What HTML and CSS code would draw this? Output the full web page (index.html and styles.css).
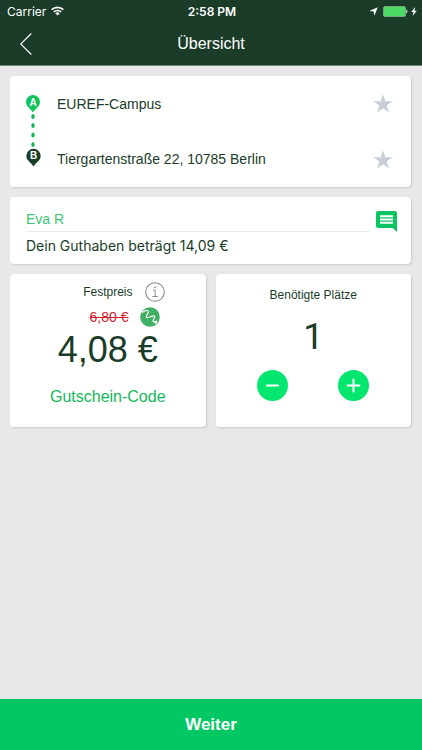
FILE: index.html
```html
<!DOCTYPE html>
<html lang="de">
<head>
<meta charset="utf-8">
<meta name="viewport" content="width=device-width, initial-scale=1">
<title>Übersicht</title>
<link rel="stylesheet" href="styles.css">
</head>
<body>
<div class="app">
  <header class="header">
    <div class="status">
      <div class="status-left">
        <span>Carrier</span>
        <svg width="13" height="10" viewBox="0 0 13 10" fill="none" stroke="#fff" stroke-width="1.7" aria-hidden="true">
          <path d="M.7 3.700a8.300 8.300 0 0 1 11.600 0M2.800 6a5.300 5.300 0 0 1 7.400 0"/>
          <path d="M6.500 9.600 4.400 7.400a3 3 0 0 1 4.200 0z" fill="#fff" stroke="none"/>
        </svg>
      </div>
      <span class="clock">2:58 PM</span>
      <div class="status-right">
        <svg width="9" height="9" viewBox="0 0 9 9" fill="#fff" aria-hidden="true"><path d="M8.800.2 5.300 8.800 4.600 4.600.2 4.100z"/></svg>
        <svg width="25" height="11" viewBox="0 0 25 11" aria-hidden="true">
          <rect x=".5" y=".5" width="22" height="10" rx="1.500" fill="#4cd964" stroke="#8fb596" stroke-width=".7"/>
          <path d="M23.400 3.600c1.400.5 1.400 3.300 0 3.800z" fill="#fff"/>
        </svg>
        <svg width="6" height="9" viewBox="0 0 6 9" fill="#fff" aria-hidden="true"><path d="M4.200 0 .2 5h2.300L1.600 9l4.200-5.300H3.400z"/></svg>
      </div>
    </div>
    <div class="navbar">
      <button class="plain" type="button" aria-label="Zurück">
        <svg width="12" height="22" viewBox="0 0 12 22" fill="none" stroke="#fff" stroke-width="1.100"><path d="M11.300.5.7 11l10.600 10.500"/></svg>
      </button>
      <h1 class="title">Übersicht</h1>
    </div>
  </header>

  <main class="content">
    <section class="card route">
      <svg class="pins" width="15" height="74" viewBox="0 0 15 74" aria-hidden="true">
        <path d="M7 17.500C4.300 13.200 0 11.500 0 7a7 7 0 0 1 14 0C14 11.500 9.700 13.200 7 17.500z" fill="#10c45c"/>
        <g fill="#14b85a">
          <ellipse cx="7" cy="21.500" rx="1.700" ry="2.500"/><ellipse cx="7" cy="30.500" rx="1.700" ry="2.500"/>
          <ellipse cx="7" cy="40" rx="1.700" ry="2.500"/><ellipse cx="7" cy="49.500" rx="1.700" ry="2.500"/>
        </g>
        <path d="M7.500 71.500C4.800 67 .3 65.500 .3 61a7.200 7.200 0 0 1 14.400 0C14.700 65.500 10.200 67 7.500 71.500z" fill="#1a3d28"/>
        <text class="pin-letter" x="7" y="10.500">A</text>
        <text class="pin-letter" x="7.500" y="64">B</text>
      </svg>
      <span class="address">EUREF-Campus</span>
      <button class="plain" type="button" aria-label="EUREF-Campus als Favorit">
        <svg width="20" height="19" viewBox="0 0 20 19" fill="#c8cfd9"><path d="m10 .3 2.300 6.900h7.300l-5.900 4.300 2.200 7L10 14.200l-5.900 4.300 2.200-7L.4 7.200h7.300z"/></svg>
      </button>
      <span class="address">Tiergartenstraße 22, 10785 Berlin</span>
      <button class="plain" type="button" aria-label="Tiergartenstraße als Favorit">
        <svg width="20" height="19" viewBox="0 0 20 19" fill="#c8cfd9"><path d="m10 .3 2.300 6.900h7.300l-5.900 4.300 2.200 7L10 14.200l-5.900 4.300 2.200-7L.4 7.200h7.300z"/></svg>
      </button>
    </section>

    <section class="card account">
      <div class="account-text">
        <p class="name">Eva R</p>
        <p class="balance">Dein Guthaben beträgt 14,09 €</p>
      </div>
      <button class="plain" type="button" aria-label="Nachricht">
        <svg width="21" height="21" viewBox="0 0 21 21"><path d="M2 0h17q2 0 2 2v19l-4.300-4H2q-2 0-2-2V2q0-2 2-2z" fill="#0dc463"/><path d="M4 5.200h13M4 8.500h13M4 11.800h13" stroke="#fff" stroke-width="1.900"/></svg>
      </button>
    </section>

    <div class="pair">
      <section class="card price">
        <div class="fixed">
          <span class="label">Festpreis</span>
          <button class="plain" type="button" aria-label="Information">
            <svg width="20" height="20" viewBox="0 0 20 20" fill="none" stroke="#8b8b8b"><circle cx="10" cy="10" r="9.300" stroke-width="1.100"/><path d="M8 8.200h2.200v6.300M7.300 14.500h5.600" stroke-width="1"/><circle cx="10" cy="5.400" r=".9" fill="#8b8b8b" stroke="none"/></svg>
          </button>
        </div>
        <div class="discount">
          <s class="old">6,80 €</s>
          <svg width="20" height="20" viewBox="0 0 20 20" fill="none" stroke="#fff" stroke-width="1.200" stroke-linejoin="round" aria-hidden="true"><circle cx="10" cy="10" r="9.800" fill="#3fb061" stroke="none"/><path d="M2 5.500C4 3.800 7.500 2.800 8.400 4.200 9.200 5.700 5.400 8.800 6.400 10.300c1.200 1.500 6.600-2.600 8.200-1.200 1.300 1.200-2.600 4.200-1.500 5.400.5.500 1.400.5 2.600.3"/><path d="m13.500 14.300 4-.7-1.300 4z" fill="#fff" stroke="none"/></svg>
        </div>
        <p class="big">4,08 €</p>
        <a class="voucher" href="#gutschein">Gutschein-Code</a>
      </section>

      <section class="card seats">
        <h2 class="label">Benötigte Plätze</h2>
        <output class="big count">1</output>
        <div class="stepper">
          <button class="round" type="button" aria-label="Weniger"><svg width="15" height="15" viewBox="0 0 15 15" stroke="#fff" stroke-width="2" stroke-linecap="round"><path d="M2 7.500h11"/></svg></button>
          <button class="round" type="button" aria-label="Mehr"><svg width="15" height="15" viewBox="0 0 15 15" stroke="#fff" stroke-width="2" stroke-linecap="round"><path d="M1.500 7.500h12M7.500 1.500v12"/></svg></button>
        </div>
      </section>
    </div>
  </main>

  <button class="next" type="button">Weiter</button>
</div>
</body>
</html>
```
FILE: styles.css
```css
* { box-sizing: border-box; }

body, h1, h2, p { margin: 0; }

body {
  background: #e8e8ea;
  color: #1a3c29;
  font-family: "Liberation Sans", Arial, sans-serif;
  font-size: 14px;
}

svg { display: block; }

button { font-family: inherit; cursor: pointer; }

.plain {
  padding: 0;
  border: 0;
  background: none;
}

.app {
  display: flex;
  flex-direction: column;
  min-height: 100vh;
}

.header {
  background: #1a3c28;
  border-bottom: 1px solid #718579;
  color: #fff;
}

.status {
  display: grid;
  grid-template-columns: 1fr auto 1fr;
  align-items: center;
  height: 22px;
  padding: 0 5px 0 7px;
  font-family: Inter, sans-serif;
  font-size: 12px;
}

.status-left {
  display: flex;
  align-items: center;
  gap: 5px;
}

.clock { font-weight: 600; }

.status-right {
  display: flex;
  align-items: center;
  justify-content: flex-end;
  gap: 5px;
}

.status-right svg:last-child { margin-left: -2px; }

.navbar {
  display: grid;
  grid-template-columns: 12px 1fr 12px;
  align-items: center;
  height: 43px;
  padding: 0 20px;
}

.title {
  font-size: 16px;
  font-weight: 400;
  text-align: center;
}

.content {
  display: flex;
  flex: 1;
  flex-direction: column;
  gap: 10px;
  padding: 10px 11px 10px 10px;
}

.card {
  border-radius: 4px;
  background: #fff;
  box-shadow: 1px 1px 2px #c9c9cc;
}

.route {
  display: grid;
  grid-template-columns: 15px 1fr 20px;
  grid-template-rows: 55px 56px;
  column-gap: 16px;
  align-items: center;
  padding: 0 18px 0 16px;
}

.pins { grid-row: span 2; }

.pin-letter {
  fill: #fff;
  font-size: 10px;
  font-weight: 700;
  text-anchor: middle;
}

.account {
  display: flex;
  align-items: flex-start;
  gap: 6px;
  padding: 14px 14px 8px 16px;
}

.account-text { flex: 1; }

.name {
  padding-bottom: 4px;
  border-bottom: 1px solid #e9ebeb;
  color: #3cc672;
  line-height: 16px;
}

.balance {
  padding-top: 4px;
  font-family: Inter, sans-serif;
  line-height: 20px;
}

.pair {
  display: grid;
  grid-template-columns: 1fr 1fr;
  gap: 10px;
}

.price, .seats {
  display: flex;
  flex-direction: column;
  align-items: center;
  min-height: 153px;
}

.price { padding-top: 8px; }

.fixed, .discount {
  display: flex;
  align-items: center;
  justify-content: flex-end;
  align-self: stretch;
}

.fixed {
  gap: 12px;
  padding-right: 41px;
}

.discount {
  gap: 11px;
  margin-top: 5px;
  padding-right: 46px;
}

.label {
  font-size: 12px;
  font-weight: 400;
  line-height: 16px;
}

.old { color: #d0202e; }

.big {
  font-size: 36px;
  line-height: 40px;
}

.price .big { margin-top: 3px; }

.voucher {
  margin-top: 17px;
  color: #12b75c;
  font-size: 16px;
  line-height: 20px;
  text-decoration: none;
}

.seats { padding-top: 13px; }

.seats .big { margin-top: 14px; }

.count { font-family: Roboto, sans-serif; }

.stepper {
  display: flex;
  gap: 50px;
  margin-top: 13px;
}

.round {
  display: grid;
  place-items: center;
  width: 31px;
  height: 31px;
  padding: 0;
  border: 0;
  border-radius: 50%;
  background: #05e66f;
}

.next {
  height: 51px;
  border: 0;
  background: #02c864;
  color: #fff;
  font-size: 17px;
  font-weight: 700;
}
```
